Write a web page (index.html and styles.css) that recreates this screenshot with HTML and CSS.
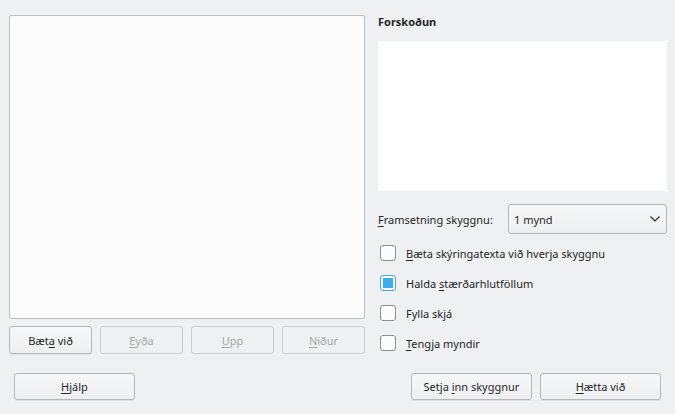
FILE: index.html
```html
<!DOCTYPE html>
<html lang="is">
<head>
<meta charset="utf-8">
<link rel="stylesheet" href="styles.css">
</head>
<body>
<div class="dialog">
  <div class="main">
    <div class="left">
      <div class="listbox"></div>
      <div class="btnrow">
        <button class="btn">Bæt<u>a</u> við</button>
        <button class="btn" disabled><u>E</u>yða</button>
        <button class="btn" disabled><u>U</u>pp</button>
        <button class="btn" disabled><u>N</u>iður</button>
      </div>
    </div>
    <div class="right">
      <div class="title">Forskoðun</div>
      <div class="preview"></div>
      <div class="comborow">
        <span class="label"><u>F</u>ramsetning skyggnu:</span>
        <div class="combo">
          <span>1 mynd</span>
          <svg class="chev" width="10" height="6" viewBox="0 0 10 6"><path d="M0.5 0.5 L5 5 L9.5 0.5" fill="none" stroke="#232627" stroke-width="1.1"/></svg>
        </div>
      </div>
      <div class="checks">
        <label class="check"><span class="box"></span><span><u>B</u>æta skýringatexta við hverja skyggnu</span></label>
        <label class="check"><span class="box on"></span><span>Halda <u>s</u>tærðarhlutföllum</span></label>
        <label class="check"><span class="box"></span><span>Fylla sk<u>j</u>á</span></label>
        <label class="check"><span class="box"></span><span><u>T</u>engja myndir</span></label>
      </div>
    </div>
  </div>
  <div class="footer">
    <button class="btn wide"><u>H</u>jálp</button>
    <div class="spacer"></div>
    <button class="btn wide">Setja <u>i</u>nn skyggnur</button>
    <button class="btn wide"><u>H</u>ætta við</button>
  </div>
</div>
</body>
</html>
```

FILE: styles.css
```css
html, body {
  margin: 0;
  padding: 0;
  background: #eff0f1;
  width: 675px;
  height: 414px;
  overflow: hidden;
}
body {
  font-family: "Noto Sans", "DejaVu Sans", sans-serif;
  font-size: 11px;
  color: #232627;
}
u {
  text-decoration: underline;
  text-underline-offset: 2px;
  text-decoration-thickness: 1px;
}
.dialog {
  padding: 15px 8px 0 9px;
  display: flex;
  flex-direction: column;
}
.main {
  display: flex;
  gap: 13px;
}
.left {
  width: 356px;
  display: flex;
  flex-direction: column;
  gap: 7px;
}
.listbox {
  height: 302px;
  background: #fcfcfc;
  border: 1px solid #bcbebf;
  border-radius: 2px;
}
.btnrow {
  display: flex;
  gap: 8px;
}
.btn {
  font-family: inherit;
  font-size: 11px;
  color: #232627;
  height: 28px;
  width: 83px;
  padding: 0;
  border: 1px solid #b5b6b7;
  border-radius: 3px;
  background: linear-gradient(#f7f7f8, #eeeff0);
  box-shadow: 0 1px 0 rgba(0,0,0,0.06);
}
.btn:disabled {
  color: #a5a7a8;
  border-color: #cdcecf;
  background: #eff0f1;
  box-shadow: none;
}
.right {
  width: 289px;
  display: flex;
  flex-direction: column;
}
.title {
  font-weight: bold;
  font-size: 11px;
  height: 13px;
  line-height: 13px;
}
.preview {
  margin-top: 13px;
  height: 150px;
  background: #ffffff;
}
.comborow {
  margin-top: 13px;
  display: flex;
  align-items: center;
  justify-content: space-between;
}
.combo {
  box-sizing: border-box;
  width: 159px;
  height: 30px;
  border: 1px solid #b5b6b7;
  border-radius: 3px;
  background: linear-gradient(#f7f7f8, #eeeff0);
  display: flex;
  align-items: center;
  justify-content: space-between;
  padding: 0 6px 0 5px;
}
.chev {
  display: block;
}
.checks {
  margin-top: 11px;
  display: flex;
  flex-direction: column;
  gap: 14px;
}
.check {
  display: flex;
  align-items: center;
  gap: 10px;
  height: 16px;
  padding-left: 2px;
}
.box {
  box-sizing: border-box;
  width: 16px;
  height: 16px;
  border: 1px solid #8e9091;
  border-radius: 3px;
  background: #fcfcfc;
  flex: none;
}
.box.on {
  border-color: #3daee9;
  position: relative;
}
.box.on::after {
  content: "";
  position: absolute;
  left: 2px;
  top: 2px;
  width: 10px;
  height: 10px;
  background: #3daee9;
}
.footer {
  margin-top: 19px;
  display: flex;
  gap: 8px;
  padding: 0 6px 0 5px;
}
.btn.wide {
  width: 121px;
  height: 27px;
}
.spacer {
  flex: 1;
}
```
